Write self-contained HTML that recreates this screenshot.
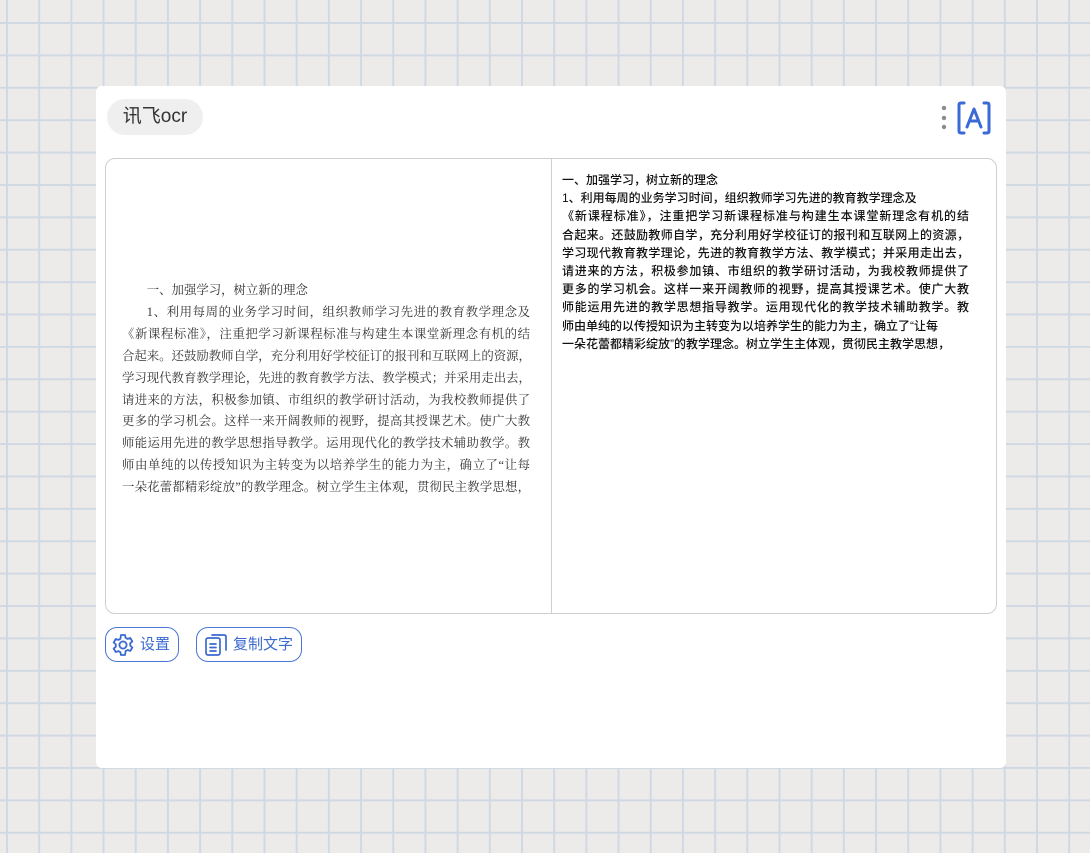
<!DOCTYPE html>
<html><head><meta charset="utf-8"><style>
html,body{margin:0;padding:0}
body{width:1090px;height:853px;overflow:hidden;position:relative;background-color:#ecebea;
background-image:linear-gradient(to right,#d0d9e3 2px,transparent 2px),linear-gradient(to bottom,#d0d9e3 2px,transparent 2px);
background-size:32.2px 32.4px;background-position:6px 22px;font-family:"Liberation Sans","Noto Sans CJK SC",sans-serif}
.card{position:absolute;left:96px;top:86px;width:910px;height:682px;background:#fff;border-radius:6px}
.pill{position:absolute;left:11px;top:13px;width:96px;height:36px;border-radius:18px;background:#efefef;font-size:19px;color:#333;line-height:36px;text-align:center}
.panel{position:absolute;left:9px;top:72px;width:890px;height:454px;border:1px solid #cfcfcf;border-radius:10px;overflow:hidden}
.div{position:absolute;left:445px;top:0;width:1px;height:100%;background:#cfcfcf}
.l{position:absolute;left:16px;top:121px;width:408px;font-family:"Liberation Serif","Noto Serif CJK SC",serif;font-size:12.4px;line-height:21.9px;color:#333}
.r{position:absolute;left:456px;top:12px;width:407px;font-size:12px;line-height:18.2px;color:#111;font-weight:500}
.j{text-align:justify;text-align-last:justify;white-space:nowrap}
.n{white-space:nowrap}
.btn{position:absolute;top:541px;height:33px;border:1.5px solid #4a77d6;border-radius:12px;color:#3a6ad0;font-size:15px;line-height:33px;box-sizing:content-box}
.btn svg{position:absolute;top:5px}
</style></head><body>
<div class="card">
<div class="pill">讯飞ocr</div>
<svg style="position:absolute;left:844px;top:18px" width="8" height="30"><circle cx="4" cy="4" r="2.2" fill="#8a8a8a"/><circle cx="4" cy="14" r="2.2" fill="#8a8a8a"/><circle cx="4" cy="23" r="2.2" fill="#8a8a8a"/></svg>
<svg style="position:absolute;left:861px;top:15px" width="34" height="34" fill="none" stroke="#3a6ad6" stroke-width="3" stroke-linecap="round" stroke-linejoin="round">
<path d="M7 2H4Q2 2 2 4V30Q2 32 4 32H7"/><path d="M27 2H30Q32 2 32 4V30Q32 32 30 32H27"/><path d="M10 26L17 8L24 26M12.5 20H21.5"/></svg>
<div class="panel">
<div class="div"></div>
<div class="l"><div class="n">&emsp;&emsp;一、加强学习，树立新的理念</div><div class="j">&emsp;&emsp;1、利用每周的业务学习时间，组织教师学习先进的教育教学理念及</div><div class="j">《新课程标准》，注重把学习新课程标准与构建生本课堂新理念有机的结</div><div class="j">合起来。还鼓励教师自学，充分利用好学校征订的报刊和互联网上的资源，</div><div class="j">学习现代教育教学理论，先进的教育教学方法、教学模式；并采用走出去，</div><div class="j">请进来的方法，积极参加镇、市组织的教学研讨活动，为我校教师提供了</div><div class="j">更多的学习机会。这样一来开阔教师的视野，提高其授课艺术。使广大教</div><div class="j">师能运用先进的教学思想指导教学。运用现代化的教学技术辅助教学。教</div><div class="j">师由单纯的以传授知识为主转变为以培养学生的能力为主，确立了“让每</div><div class="j">一朵花蕾都精彩绽放”的教学理念。树立学生主体观，贯彻民主教学思想，</div></div>
<div class="r"><div class="n">一、加强学习，树立新的理念</div><div class="n">1、利用每周的业务学习时间，组织教师学习先进的教育教学理念及</div><div class="j">《新课程标准》，注重把学习新课程标准与构建生本课堂新理念有机的结</div><div class="j">合起来。还鼓励教师自学，充分利用好学校征订的报刊和互联网上的资源，</div><div class="j">学习现代教育教学理论，先进的教育教学方法、教学模式；并采用走出去，</div><div class="j">请进来的方法，积极参加镇、市组织的教学研讨活动，为我校教师提供了</div><div class="j">更多的学习机会。这样一来开阔教师的视野，提高其授课艺术。使广大教</div><div class="j">师能运用先进的教学思想指导教学。运用现代化的教学技术辅助教学。教</div><div class="n">师由单纯的以传授知识为主转变为以培养学生的能力为主，确立了“让每</div><div class="n">一朵花蕾都精彩绽放”的教学理念。树立学生主体观，贯彻民主教学思想，</div></div>
</div>
<div class="btn" style="left:9px;width:72px">
<svg style="left:5px" width="24" height="24" viewBox="0 0 24 24" fill="none" stroke="#3a6ad0" stroke-width="1.8" stroke-linejoin="round"><path d="M10 2h4l.6 2.8 2 1.1 2.7-.9 2 3.4-2.1 1.9v2.3l2.1 1.9-2 3.4-2.7-.9-2 1.1L14 22h-4l-.6-2.8-2-1.1-2.7.9-2-3.4 2.1-1.9v-2.3L2.7 9.4l2-3.4 2.7.9 2-1.1z"/><circle cx="12" cy="12" r="3.6"/></svg>
<span style="position:absolute;left:34px">设置</span></div>
<div class="btn" style="left:100px;width:104px">
<svg style="left:7px;top:6px" width="24" height="22" viewBox="0 0 24 22" fill="none" stroke="#3a6ad0" stroke-width="1.7" stroke-linecap="round"><rect x="2" y="4" width="14" height="17" rx="2"/><path d="M6 10h6M6 13.5h6M6 17h6"/><path d="M8 1h12q2 0 2 2v13"/></svg>
<span style="position:absolute;left:36px">复制文字</span></div>
</div>
</body></html>
